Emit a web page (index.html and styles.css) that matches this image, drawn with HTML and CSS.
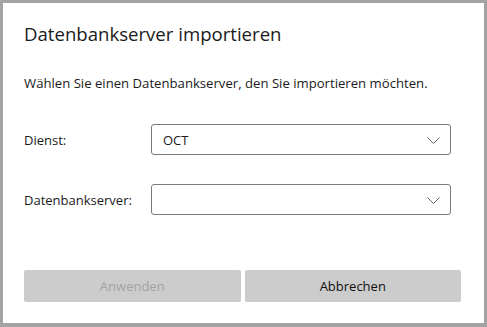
FILE: index.html
```html
<!DOCTYPE html>
<html lang="de">
<head>
    <meta charset="UTF-8">
    <title>Datenbankserver importieren</title>
    <link rel="stylesheet" href="styles.css">
</head>
<body>
    <div class="dialog">
        <h1 class="title">Datenbankserver importieren</h1>
        <p class="hint">Wählen Sie einen Datenbankserver, den Sie importieren möchten.</p>

        <div class="form">
            <label class="label">Dienst:</label>
            <div class="select">
                <span class="value">OCT</span>
                <svg class="chevron" width="13" height="7" viewBox="0 0 13 7"><path d="M0.5 0.5 L6.5 6.5 L12.5 0.5" fill="none" stroke="#666" stroke-width="1"/></svg>
            </div>

            <label class="label">Datenbankserver:</label>
            <div class="select">
                <span class="value"></span>
                <svg class="chevron" width="13" height="7" viewBox="0 0 13 7"><path d="M0.5 0.5 L6.5 6.5 L12.5 0.5" fill="none" stroke="#666" stroke-width="1"/></svg>
            </div>
        </div>

        <div class="buttons">
            <button class="btn" disabled>Anwenden</button>
            <button class="btn">Abbrechen</button>
        </div>
    </div>
</body>
</html>
```

FILE: styles.css
```css
html, body {
    margin: 0;
    height: 100%;
}

body {
    font-family: "Open Sans", "Noto Sans", sans-serif;
    color: #1a1a1a;
}

.dialog {
    box-sizing: border-box;
    width: 487px;
    height: 327px;
    background: #fff;
    border: 3px solid #a3a3a3;
    border-bottom-width: 4px;
    padding: 0 23px 0 21px;
    display: flex;
    flex-direction: column;
}

.title {
    margin: 18px 0 0;
    font-size: 18.6px;
    font-weight: 400;
    line-height: 26px;
}

.hint {
    margin: 27px 0 0;
    font-size: 13.15px;
    line-height: 18px;
}

.form {
    margin: 32px 10px 0 0;
    display: grid;
    grid-template-columns: 127px 1fr;
    row-gap: 29px;
    align-items: center;
}

.label {
    font-size: 13px;
}

.select {
    box-sizing: border-box;
    height: 31px;
    border: 1px solid #7a7a7a;
    border-radius: 3px;
    display: flex;
    align-items: center;
    justify-content: space-between;
    padding: 0 10px 0 11px;
}

.value {
    font-size: 13px;
}

.chevron {
    margin-top: 1px;
}

.buttons {
    margin-top: auto;
    margin-bottom: 21px;
    display: flex;
    gap: 4px;
}

.btn {
    width: 217px;
    height: 32px;
    border: none;
    border-radius: 2px;
    background: #cccccc;
    font-family: inherit;
    font-size: 13px;
    color: #111;
}

.btn:disabled {
    color: #a3a3a3;
}
```
